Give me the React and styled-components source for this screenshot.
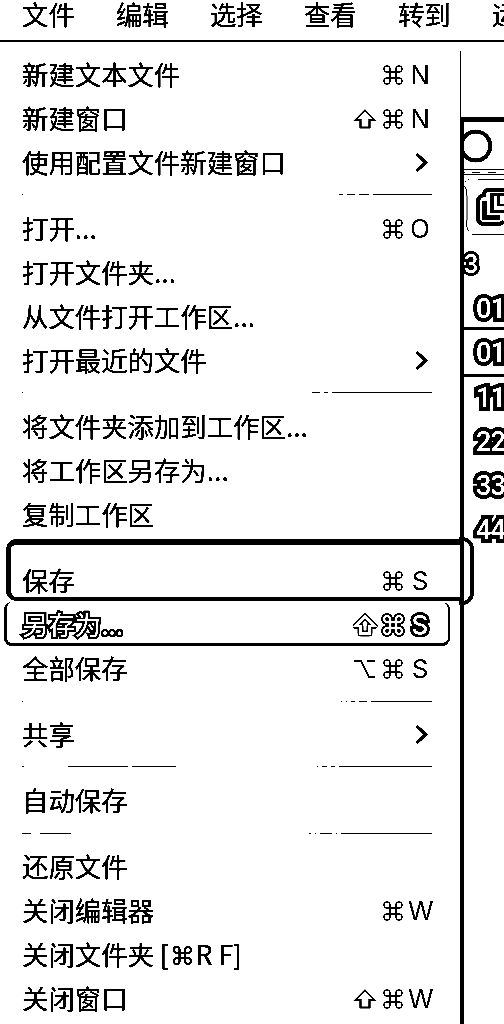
import React from "react";
import styled, { createGlobalStyle, css } from "styled-components";

const Global = createGlobalStyle`
  html, body { margin: 0; background: #fff; overflow: hidden; }
  * { box-sizing: border-box; }
`;

const Screen = styled.div`
  position: relative;
  width: 504px;
  height: 1024px;
  overflow: hidden;
  background: #fff;
  color: #000;
  font-family: "Noto Sans CJK SC", "Liberation Sans", sans-serif;
  font-size: 26.4px;
  -webkit-text-stroke: 0.3px #000;
  filter: grayscale(1) contrast(12);
`;

const MenuBar = styled.nav`
  display: flex;
  align-items: center;
  gap: 41.2px;
  height: 42px;
  padding: 0 0 12px 22px;
  border-bottom: 2px solid #000;
  white-space: nowrap;
`;

const BarItem = styled.span`
  flex: none;
  line-height: 26px;
`;

const Body = styled.div`
  display: flex;
  height: 982px;
`;

const Menu = styled.div`
  flex: none;
  width: 460px;
  padding: 11px 28px 0 22px;
`;

const Row = styled.div`
  display: flex;
  justify-content: space-between;
  align-items: center;
  height: 44px;
  white-space: nowrap;
  ${(p) =>
    p.$active &&
    css`
      color: #fff;
      -webkit-text-stroke: 4.5px #000;
      paint-order: stroke fill;
    `}
`;

const Label = styled.span`
  height: 44px;
  line-height: 42px;
`;

const CommandSign = styled.span`
  font-family: "DejaVu Sans", sans-serif;
  font-size: 25px;
  line-height: 1;
  margin: 0 1px;
`;

const Keys = styled.span`
  display: flex;
  align-items: center;
  gap: 7px;
  height: 44px;
`;

const Letter = styled.span`
  width: 24px;
  margin-left: -2px;
  font-family: Inter, "Liberation Sans", sans-serif;
  font-size: 26px;
  line-height: 44px;
  text-align: center;
  -webkit-text-stroke-width: 0;
  ${(p) =>
    p.$active &&
    css`
      font-weight: 500;
      -webkit-text-stroke-width: 6px;
    `}
`;

const Glyph = styled.svg`
  display: block;
  overflow: visible;
  fill: none;
  stroke: #000;
  stroke-width: ${(p) => p.$w || 2};
`;

const Halo = styled.path`
  stroke: #000;
  stroke-width: 6;
  stroke-linejoin: round;
`;

const Inner = styled.path`
  stroke: #fff;
  stroke-width: 2.6;
`;

const Separator = styled.div`
  display: flex;
  justify-content: space-between;
  height: 22px;
  padding-top: ${(p) => p.$top || 9}px;
`;

const Hairline = styled.i`
  height: 1px;
  width: ${(p) => p.$w}px;
  background: #000;
`;

const HairGroup = styled.span`
  display: flex;
  gap: 4px;
  margin-left: ${(p) => p.$ml || 0}px;
  margin-right: ${(p) => (p.$ml ? "auto" : 0)};
`;

const Backdrop = styled.aside`
  flex: none;
  width: 44px;
  padding-top: 9px;
`;

const Shade = styled.div`
  height: 66px;
  border-left: 1px solid #000;
`;

const Window = styled.div`
  height: 907px;
  border-left: 4px solid #000;
  border-top: 5px solid #000;
  overflow: hidden;
`;

const WindowArt = styled.svg`
  display: block;
  width: 40px;
  height: 122px;
`;

const Outlined = styled.div`
  font-family: Roboto, "Liberation Sans", sans-serif;
  font-weight: 500;
  color: #fff;
  -webkit-text-stroke: 8px #000;
  paint-order: stroke fill;
  white-space: nowrap;
`;

const Count = styled(Outlined)`
  height: 44px;
  font-size: 25px;
  line-height: 42px;
  -webkit-text-stroke-width: 6px;
`;

const Line = styled(Outlined)`
  height: ${(p) => p.$h || 44}px;
  padding-left: 12px;
  font-size: 27px;
  letter-spacing: -0.8px;
  line-height: ${(p) => p.$lh || 42}px;
  border-bottom: ${(p) => p.$rule || 0}px solid #000;
`;

const Highlight = styled.div`
  position: absolute;
  left: 6px;
  top: 539px;
  width: 458px;
  height: 62px;
  border: solid #000;
  border-width: 6px 0 4px 5px;
  border-radius: 10px 0 0 10px;
`;

const HighlightCap = styled.div`
  position: absolute;
  left: 459px;
  top: 537px;
  width: 15px;
  height: 68px;
  border: 4px solid #000;
  border-left: 0;
  border-radius: 0 12px 12px 0;
`;

const Selection = styled.div`
  position: absolute;
  left: 4px;
  top: 602px;
  width: 446px;
  height: 44px;
  border: solid #000;
  border-width: 0 2px 3px 3px;
  border-radius: 8px;
`;

const COMMAND =
  "M7 7H13V13H7ZM7 7V4A3 3 0 1 0 4 7ZM13 7H16A3 3 0 1 0 13 4ZM13 13V16A3 3 0 1 0 16 13ZM7 13H4A3 3 0 1 0 7 16Z";
const SHIFT = "M11 1.5L20.5 11H15.5V18.5H6.5V11H1.5Z";
const OPTION = "M0 2H7L15 18H21M13 2H21";

const Key = ({ d, width, weight, active }) => (
  <Glyph width={width} height="20" viewBox={`0 0 ${width} 20`} $w={weight}>
    {active ? (
      <>
        <Halo d={d} />
        <Inner d={d} />
      </>
    ) : (
      <path d={d} />
    )}
  </Glyph>
);

const Shortcut = ({ keys, active }) => (
  <Keys>
    {keys.length > 2 && (
      <Key d={keys[0] === "⇧" ? SHIFT : OPTION} width={22} weight={2.05} active={active} />
    )}
    <Key d={COMMAND} width={20} weight={1.4} active={active} />
    <Letter $active={active}>{keys[keys.length - 1]}</Letter>
  </Keys>
);

const Chevron = () => (
  <Keys>
    <Glyph width="17" height="20" viewBox="0 0 17 20" $w={3.2}>
      <path d="M1.5 1L10.5 9.5L1.5 18" />
    </Glyph>
  </Keys>
);

const MENU = [
  { text: "新建文本文件", keys: "⌘N" },
  { text: "新建窗口", keys: "⇧⌘N" },
  { text: "使用配置文件新建窗口", more: true },
  { sep: [[1], [4, 8, 10, 59]] },
  { text: "打开...", keys: "⌘O" },
  { text: "打开文件夹..." },
  { text: "从文件打开工作区..." },
  { text: "打开最近的文件", more: true },
  { sep: [[1], [8, 4, 100]] },
  { text: "将文件夹添加到工作区..." },
  { text: "将工作区另存为..." },
  { text: "复制工作区" },
  { sep: [[], []] },
  { text: "保存", keys: "⌘S" },
  { text: "另存为...", keys: "⇧⌘S", active: true },
  { text: "全部保存", keys: "⌥⌘S" },
  { sep: [[1], [1, 1, 4, 8, 61]], top: 10 },
  { text: "共享", more: true },
  { sep: [[2], [60, 44], [1, 5, 4, 93]] },
  { text: "自动保存" },
  { sep: [[9], [31], [2, 1, 12, 1, 91]], gap: 9, top: 10 },
  { text: "还原文件" },
  { text: "关闭编辑器", keys: "⌘W" },
  { text: <>关闭文件夹 [<CommandSign>⌘</CommandSign>R F]</> },
  { text: "关闭窗口", keys: "⇧⌘W" },
];

const MenuEntry = ({ item }) => {
  if (item.sep)
    return (
      <Separator $top={item.top}>
        {item.sep.map((group, i) => (
          <HairGroup key={i} $ml={item.sep.length === 3 && i === 1 ? item.gap || 44 : 0}>
            {group.map((w, j) => (
              <Hairline key={j} $w={w} />
            ))}
          </HairGroup>
        ))}
      </Separator>
    );
  return (
    <Row $active={item.active}>
      <Label>{item.text}</Label>
      {item.keys && <Shortcut keys={[...item.keys]} active={item.active} />}
      {item.more && <Chevron />}
    </Row>
  );
};

export default function App() {
  return (
    <>
      <Global />
      <Screen>
        <MenuBar>
          {["文件", "编辑", "选择", "查看", "转到", "运行"].map((t) => (
            <BarItem key={t}>{t}</BarItem>
          ))}
        </MenuBar>
        <Body>
          <Menu>
            {MENU.map((item, i) => (
              <MenuEntry key={i} item={item} />
            ))}
          </Menu>
          <Backdrop>
            <Shade />
            <Window>
              <WindowArt viewBox="464 122 40 122" fill="none" stroke="#000">
                <circle cx="475.8" cy="146" r="14.5" strokeWidth="4" />
                <path d="M464 169.5H504M464 174.5H504M478 179.5H504M472 234.5H504" />
                <path d="M464 172.5H465M472 172.5H480M488 172.5H496" />
                <path d="M464 186Q467 188 467 196V220Q466 229 469 231" />
                <path d="M465 182L470 179" strokeDasharray="2 1" />
                <path d="M504 190H488Q484 190 484 195Q478 196 478 202V218Q478 224 484 224H498Q502 224 504 221" strokeWidth="4" />
                <path d="M484.5 201V217.5H500" strokeWidth="5" />
                <path d="M504 194.5H492V211.5H504" strokeWidth="3.5" />
                <path d="M498.5 196V205H504" strokeWidth="2.5" />
              </WindowArt>
              <Count>3</Count>
              <Line $h={42} $rule={3} $lh={43}>01</Line>
              <Line $h={47} $rule={3} $lh={46}>01</Line>
              <Line>11</Line>
              <Line>22</Line>
              <Line>33</Line>
              <Line>44</Line>
            </Window>
          </Backdrop>
        </Body>
        <Highlight />
        <HighlightCap />
        <Selection />
      </Screen>
    </>
  );
}
